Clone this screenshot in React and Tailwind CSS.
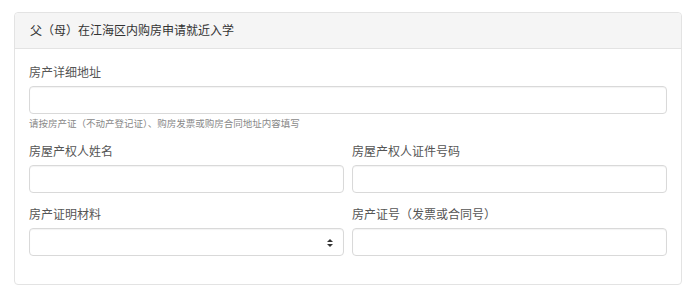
import React from "react";

const font = { fontFamily: '"Liberation Sans", "Noto Sans CJK SC", sans-serif' };

const Field = ({ label, select }) => (
  <div className="flex flex-col">
    <label className="text-[12px] leading-[17px] text-[#555] mb-[4px]">{label}</label>
    <div className="relative h-[28px] rounded-[4px] border border-[#d9d9d9] bg-white shadow-[inset_0_1px_1px_rgba(0,0,0,0.05)]">
      {select && (
        <svg
          className="absolute right-[10px] top-[10px]"
          width="6"
          height="8"
          viewBox="0 0 6 8"
        >
          <path d="M3 0 L6 3 L0 3 Z" fill="#333" />
          <path d="M0 5 L6 5 L3 8 Z" fill="#333" />
        </svg>
      )}
    </div>
  </div>
);

export default function App() {
  return (
    <div className="w-[699px] h-[307px] bg-white pt-[12px] pl-[14px]" style={font}>
      <div className="w-[668px] rounded-[4px] border border-[#e3e3e3] bg-white">
        <div className="h-[36px] flex items-center px-[15px] bg-[#f5f5f5] border-b border-[#e3e3e3] rounded-t-[4px] text-[12px] text-[#333]">
          父（母）在江海区内购房申请就近入学
        </div>
        <div className="px-[14px] pt-[16px] pb-[28px]">
          <Field label="房产详细地址" />
          <p className="mt-[3px] text-[9.5px] leading-[14px] text-[#888]">
            请按房产证（不动产登记证）、购房发票或购房合同地址内容填写
          </p>
          <div className="grid grid-cols-2 gap-x-[8px] gap-y-[14px] mt-[13px]">
            <Field label="房屋产权人姓名" />
            <Field label="房屋产权人证件号码" />
            <Field label="房产证明材料" select />
            <Field label="房产证号（发票或合同号）" />
          </div>
        </div>
      </div>
    </div>
  );
}
